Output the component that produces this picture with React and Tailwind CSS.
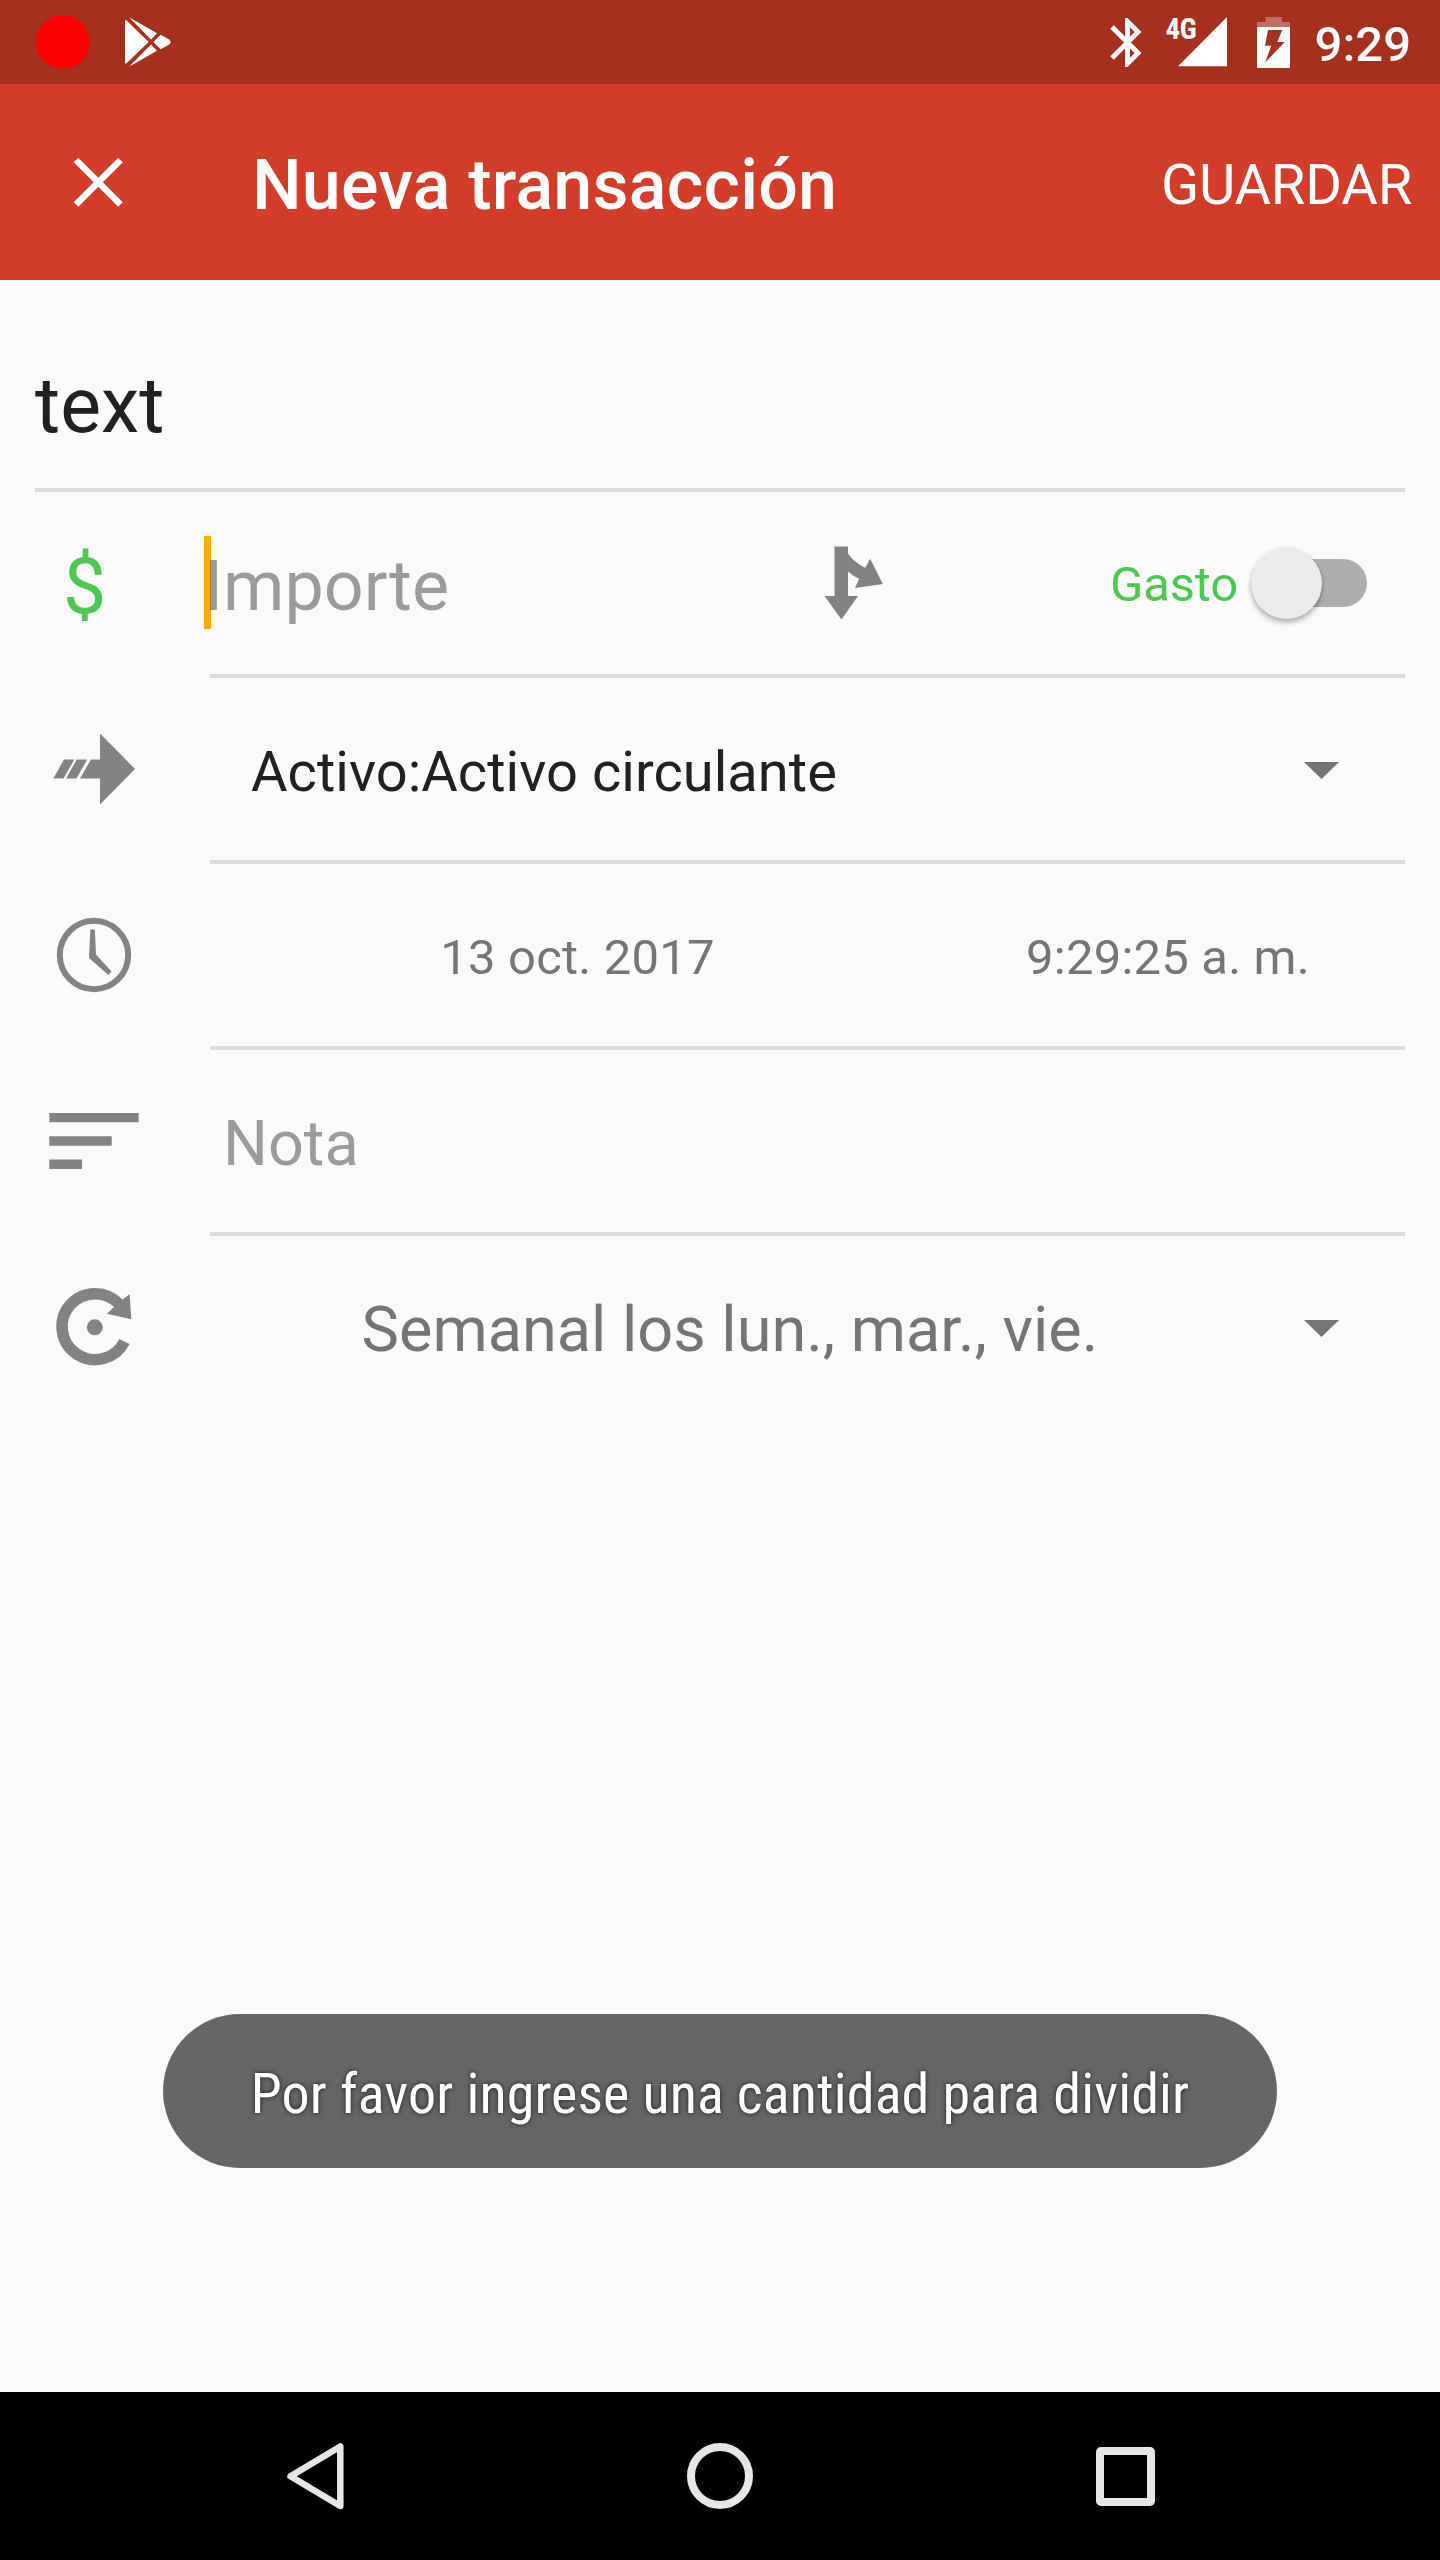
function StatusBar() {
  return (
    <div className="flex h-[84px] items-center bg-[#a53020] text-white">
      <div className="ml-[36px] size-[54px] rounded-full bg-[#ff0000]" />
      <svg className="ml-[35px] h-[50px] w-[46px]" viewBox="125 17 46 50" fill="currentColor">
        <path d="M125 20.3L126 20l22.7 22L126 63.8l-1-.5z" />
        <path d="M129 17.2l28 16-6 6.2z" />
        <path d="M129 66.8l28-16-6-6.2z" />
        <path d="M153.3 42l7.4-7.2 8 4.4q4 2.8 0 5.6l-8 4.4z" />
      </svg>
      <svg className="ml-auto h-[59px] w-[59px]" viewBox="0 0 24 24" fill="currentColor">
        <path d="M17.71 7.71L12 2h-1v7.59L6.41 5 5 6.41 10.59 12 5 17.59 6.41 19 11 14.41V22h1l5.71-5.71-4.3-4.29 4.3-4.29zM13 5.83l1.88 1.88L13 9.59V5.83zm1.88 10.46L13 18.17v-3.76l1.88 1.88z" />
      </svg>
      <div className="relative ml-[21px] h-[50px] w-[49px]">
        <svg className="h-[50px] w-[49px]" viewBox="0 0 49 50" fill="currentColor">
          <path d="M0 49.3L49 0v49.3z" />
        </svg>
        <span className="absolute -left-[12px] -top-[4px] font-['Roboto_Condensed',Roboto,sans-serif] text-[29px] font-bold leading-[32px] tracking-[-0.5px]">
          4G
        </span>
      </div>
      <svg className="ml-[30px] h-[51px] w-[33px]" viewBox="1257 16 33 51">
        <path fill="#c36e63" d="M1257 21h8.500v-5h16.500v5h8v5h-33z" />
        <path fill="#fff" fillRule="evenodd" d="M1257 26h33v41h-33zM1268 29l-3 15.700h6.300L1265 61.700 1284.700 41h-7.400l5-12z" />
      </svg>
      <span className="ml-[25px] mr-[29px] pt-[6px] text-[49px] font-medium leading-[60px]">9:29</span>
    </div>
  );
}

function Toolbar() {
  return (
    <div className="flex h-[196px] items-center bg-[#d13d2a] text-white">
      <svg className="ml-[70px] size-[56px]" viewBox="0 0 56 56" stroke="currentColor" strokeWidth="6.6">
        <path d="M6 6l44.500 44.500M50.500 6L6 50.500" />
      </svg>
      <h1 className="ml-[126px] pt-[6px] text-[70px] font-medium leading-[80px] tracking-[0.2px]">Nueva transacción</h1>
      <span className="ml-auto mr-[28px] pt-[6px] text-[56px] leading-[64px] tracking-[-0.15px]">GUARDAR</span>
    </div>
  );
}

function Row({ icon, last, children }) {
  return (
    <div className="flex h-[186px] pl-[35px] pr-[35px]">
      <div className="h-[182px] w-[175px] shrink-0">{icon}</div>
      <div className={last ? "flex grow items-center pb-[4px]" : "flex grow items-center border-b-4 border-[#dcdcdc]"}>
        {children}
      </div>
    </div>
  );
}

const cell = "h-[182px] w-[175px] text-[#838383]";

const ArrowIcon = () => (
  <svg className={cell} viewBox="35 678 175 182" fill="currentColor">
    <path d="M100 733.500l35 35.500-35 35.500v-26H80l11-19h9zM64 759.500h10.300l-10.800 19H53.300zM76.800 759.500h10.400l-10.800 19H66z" />
  </svg>
);

const ClockIcon = () => (
  <svg className={cell} viewBox="35 864 175 182" fill="currentColor">
    <circle cx="94" cy="955" r="34.200" fill="none" stroke="currentColor" strokeWidth="6" />
    <path d="M90.300 929.500h4.500l1.200 25 15.500 17-3 3.500L89 958z" />
  </svg>
);

const NoteIcon = () => (
  <svg className={cell} viewBox="35 1050 175 182" fill="currentColor">
    <path d="M49.300 1113h89.400v9.300H49.300zM49.300 1136.300h62.400v9.400H49.300zM49.300 1159.600H82v9.400H49.300z" />
  </svg>
);

const RepeatIcon = () => (
  <svg className={cell} viewBox="35 1236 175 182" fill="currentColor">
    <path d="M119.500 1304.500A33 33 0 1 0 124.500 1341.500" fill="none" stroke="currentColor" strokeWidth="11.500" />
    <path d="M129.700 1294l1.600 25.200-24.500-5.400 8-7.500 7-6z" />
    <circle cx="94.800" cy="1327.300" r="8" />
  </svg>
);

const Caret = () => (
  <svg className="ml-auto mr-[66px] mt-[2px] h-[17px] w-[35px] text-[#757575]" viewBox="0 0 35 17" fill="currentColor">
    <path d="M0 0h35L17.500 17z" />
  </svg>
);

function AmountRow() {
  return (
    <Row
      icon={
        <div className="flex h-full items-center pl-[28px] pt-[8px] text-[77px] leading-[80px] text-[#4dc653]">$</div>
      }
    >
      <div className="-ml-[6px] mb-[2px] h-[93px] w-[7px] bg-[#ffab00]" />
      <span className="-ml-[7px] w-[594px] pt-[6px] text-[70px] leading-[80px] text-black/38">Importe</span>
      <svg className="ml-[26px] h-[74px] w-[60px] text-[#838383]" viewBox="824.500 546 60 74" fill="currentColor">
        <path d="M835 546.500h13.500v7Q854 562 865.700 567.700l5-9L883.300 584l-27.800 4 4.200-9.300q-6.200-2.400-11.200-7.200V596h10L842 619.500 825 596h10z" />
      </svg>
      <span className="ml-auto pt-[4px] text-[49px] leading-[60px] tracking-[-0.15px] text-[#4dc653]">Gasto</span>
      <div className="relative ml-[33px] mr-[38px] h-[48px] w-[96px] rounded-full bg-[#aeaeae]">
        <div className="absolute -left-[20.5px] -top-[11.5px] size-[71px] rounded-full bg-[#ececec] shadow-[0_4px_5px_rgba(0,0,0,0.26),0_0_4px_rgba(0,0,0,0.1)]" />
      </div>
    </Row>
  );
}

function NavBar() {
  return (
    <div className="flex h-[168px] items-center text-[#e6e6e6] bg-black">
      <svg className="ml-[284px] h-[72px] w-[64px]" viewBox="284 2440 64 72" fill="none" stroke="currentColor" strokeWidth="6.500" strokeLinejoin="round">
        <path d="M340.300 2446.500v59.500L290.500 2476.300z" />
      </svg>
      <div className="ml-[339px] size-[66px] rounded-full border-[8px] border-current" />
      <div className="ml-[343px] size-[59px] rounded-[5px] border-[8px] border-current" />
    </div>
  );
}

export default function App() {
  return (
    <div className="flex h-[2560px] w-[1440px] flex-col overflow-hidden bg-[#fafafa] font-[Roboto,sans-serif]">
      <StatusBar />
      <Toolbar />
      <div className="mx-[35px] flex h-[212px] items-center border-b-4 border-[#dcdcdc] pt-[46px] text-[77px] text-[#212121]">
        text
      </div>
      <AmountRow />
      <Row icon={<ArrowIcon />}>
        <span className="pl-[41px] pt-[6px] text-[56px] leading-[64px] tracking-[0.04px] text-[#212121]">
          Activo:Activo circulante
        </span>
        <Caret />
      </Row>
      <Row icon={<ClockIcon />}>
        <div className="flex grow pt-[5px] text-[49px] leading-[60px] tracking-[0.2px] text-[#757575]">
          <span className="w-[735px] text-center">13 oct. 2017</span>
          <span className="grow pr-[14px] text-center">9:29:25 a. m.</span>
        </div>
      </Row>
      <Row icon={<NoteIcon />}>
        <span className="pl-[13px] pt-[5px] text-[63px] leading-[72px] text-black/38">Nota</span>
      </Row>
      <Row icon={<RepeatIcon />} last>
        <span className="w-[1040px] pt-[5px] text-center text-[63px] leading-[72px] text-[#757575]">
          Semanal los lun., mar., vie.
        </span>
        <Caret />
      </Row>
      <div className="mt-auto mb-[224px] flex h-[154px] w-[1114px] items-center justify-center self-center rounded-full bg-[#666666] pt-[6px]">
        <span className="whitespace-nowrap font-['Roboto_Condensed',Roboto,sans-serif] text-[56px] leading-[64px] tracking-[0.13px] text-white [text-shadow:0_0_5px_rgba(0,0,0,0.73)]">
          Por favor ingrese una cantidad para dividir
        </span>
      </div>
      <NavBar />
    </div>
  );
}
